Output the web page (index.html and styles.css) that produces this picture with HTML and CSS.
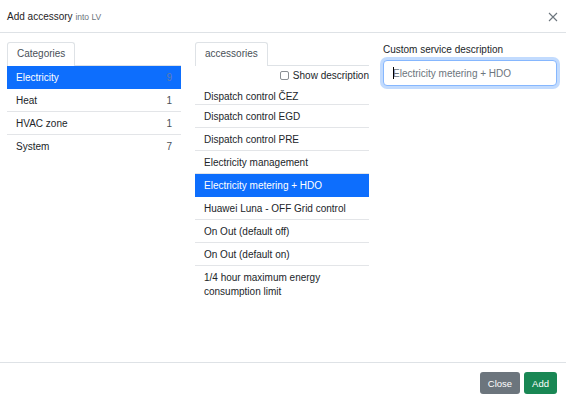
FILE: index.html
```html
<!DOCTYPE html>
<html lang="en">
<head>
<meta charset="utf-8">
<title>Add accessory</title>
<link rel="stylesheet" href="styles.css">
</head>
<body>
<div class="modal">
  <header class="modal-header">
    <h1 class="modal-title">Add accessory <small>into LV</small></h1>
    <button class="btn-close" aria-label="Close">
      <svg width="10" height="10" viewBox="0 0 10 10"><path d="M1 1L9 9M9 1L1 9" stroke="#6c757d" stroke-width="1.1" fill="none"/></svg>
    </button>
  </header>
  <main class="modal-body">
    <section class="col">
      <nav class="tabs"><span class="tab">Categories</span></nav>
      <ul class="list">
        <li class="item active"><span>Electricity</span><span class="count">9</span></li>
        <li class="item"><span>Heat</span><span class="count">1</span></li>
        <li class="item"><span>HVAC zone</span><span class="count">1</span></li>
        <li class="item"><span>System</span><span class="count">7</span></li>
      </ul>
    </section>
    <section class="col">
      <nav class="tabs"><span class="tab">accessories</span></nav>
      <label class="show-desc"><span class="checkbox"></span>Show description</label>
      <ul class="list accessories">
        <li class="item">Dispatch control ČEZ</li>
        <li class="item">Dispatch control EGD</li>
        <li class="item">Dispatch control PRE</li>
        <li class="item">Electricity management</li>
        <li class="item active">Electricity metering + HDO</li>
        <li class="item">Huawei Luna - OFF Grid control</li>
        <li class="item">On Out (default off)</li>
        <li class="item">On Out (default on)</li>
        <li class="item">1/4 hour maximum energy consumption limit</li>
      </ul>
    </section>
    <section class="col right">
      <label class="field-label" for="desc">Custom service description</label>
      <div class="field">
        <input id="desc" class="input" placeholder="Electricity metering + HDO">
        <span class="caret"></span>
      </div>
    </section>
  </main>
  <footer class="modal-footer">
    <button class="btn btn-secondary">Close</button>
    <button class="btn btn-success">Add</button>
  </footer>
</div>
</body>
</html>
```
FILE: styles.css
```css
* { box-sizing: border-box; }
html, body { margin: 0; padding: 0; background: #fff; }
body {
  font-family: "Liberation Sans", Arial, sans-serif;
  font-size: 10px;
  color: #212529;
}
.modal {
  width: 566px;
  height: 403px;
  display: flex;
  flex-direction: column;
}
.modal-header {
  height: 33px;
  border-bottom: 1px solid #dee2e6;
  display: flex;
  align-items: center;
  justify-content: space-between;
  padding: 0 8px 0 7px;
}
.modal-title {
  margin: 0;
  font-size: 10px;
  font-weight: normal;
  color: #1f2326;
  line-height: 14px;
  padding-top: 1px;
}
.modal-title small {
  font-size: 8.5px;
  color: #6c757d;
}
.btn-close {
  border: 0;
  background: none;
  padding: 0;
  width: 10px;
  height: 10px;
  display: flex;
  margin-top: 1px;
}
.modal-body {
  flex: 1;
  display: grid;
  grid-template-columns: 174px 174px 174px;
  column-gap: 14px;
  align-items: start;
  padding: 9px 9px 0 7px;
}
.tabs {
  display: flex;
  border-bottom: 1px solid #dee2e6;
  height: 24px;
}
.tab {
  border: 1px solid #dee2e6;
  border-bottom: 0;
  border-radius: 3px 3px 0 0;
  padding: 0 9px;
  line-height: 22px;
  height: 24px;
  background: #fff;
  color: #495057;
  margin-bottom: -1px;
}
.list {
  list-style: none;
  margin: 0;
  padding: 0;
}
.item {
  display: flex;
  justify-content: space-between;
  padding: 5px 9px 3px;
  line-height: 14px;
  border-bottom: 1px solid #e3e5e8;
}
.item:last-child { border-bottom: 0; }
.accessories .item:first-child { padding-top: 5px; padding-bottom: 0; }
.item.active {
  background: #0d6efd;
  border-bottom-color: #0d6efd;
  color: #fff;
}
.item.active .count { color: #5f7bb0; }
.count { color: #495057; }
.show-desc {
  display: flex;
  justify-content: flex-end;
  align-items: center;
  height: 19px;
  line-height: 14px;
}
.checkbox {
  width: 9px;
  height: 9px;
  border: 1px solid #8a8f94;
  border-radius: 2px;
  margin-right: 4px;
  background: #fff;
}
.right { padding-top: 1px; }
.field-label {
  display: block;
  line-height: 13px;
  margin-bottom: 4px;
}
.field { position: relative; }
.input {
  display: block;
  width: 100%;
  height: 26px;
  border: 1px solid #86b7fe;
  border-radius: 4px;
  box-shadow: 0 0 0 3px rgba(13, 110, 253, 0.25);
  padding: 0 9px;
  font-family: inherit;
  font-size: 10px;
  color: #212529;
  outline: none;
}
.input::placeholder { color: #6c757d; }
.caret {
  position: absolute;
  left: 10px;
  top: 7px;
  width: 1px;
  height: 12px;
  background: #000;
}
.modal-footer {
  height: 41px;
  border-top: 1px solid #dee2e6;
  display: flex;
  justify-content: flex-end;
  align-items: flex-start;
  gap: 4px;
  padding: 9px 9px 0 0;
}
.btn {
  height: 22px;
  border: 0;
  border-radius: 3px;
  padding: 0 8px;
  font-family: inherit;
  font-size: 9.5px;
  color: #fff;
}
.btn-secondary { background: #6c757d; }
.btn-success { background: #198754; }
```
